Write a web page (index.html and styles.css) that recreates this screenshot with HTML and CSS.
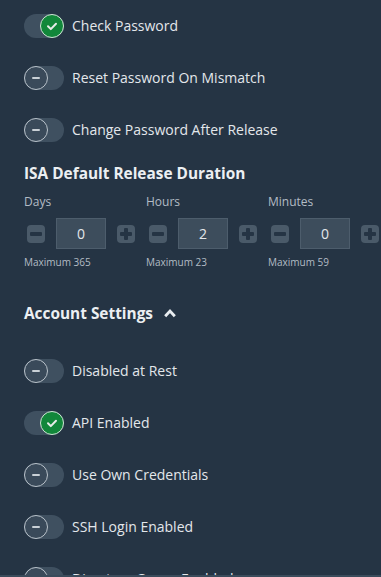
FILE: index.html
```html
<!DOCTYPE html>
<html>
<head>
<meta charset="utf-8">
<link rel="stylesheet" href="styles.css">
</head>
<body>
<div class="page">
  <div class="toggles first">
    <div class="row"><span class="toggle on"><span class="knob"><svg viewBox="0 0 24 24" width="24" height="24"><path d="M8 12.3l2.8 2.8 5.2-5.4" fill="none" stroke="#e6ece8" stroke-width="2" stroke-linecap="round" stroke-linejoin="round"/></svg></span></span><span class="label">Check Password</span></div>
    <div class="row"><span class="toggle"><span class="knob"><span class="dash"></span></span></span><span class="label">Reset Password On Mismatch</span></div>
    <div class="row"><span class="toggle"><span class="knob"><span class="dash"></span></span></span><span class="label">Change Password After Release</span></div>
  </div>

  <h2 class="heading isa">ISA Default Release Duration</h2>
  <div class="durations">
    <div class="dur">
      <div class="dlabel">Days</div>
      <div class="stepper">
        <span class="btn minus"><span class="h"></span></span>
        <span class="num">0</span>
        <span class="btn plus"><span class="h"></span><span class="v"></span></span>
      </div>
      <div class="max">Maximum 365</div>
    </div>
    <div class="dur">
      <div class="dlabel">Hours</div>
      <div class="stepper">
        <span class="btn minus"><span class="h"></span></span>
        <span class="num">2</span>
        <span class="btn plus"><span class="h"></span><span class="v"></span></span>
      </div>
      <div class="max">Maximum 23</div>
    </div>
    <div class="dur">
      <div class="dlabel">Minutes</div>
      <div class="stepper">
        <span class="btn minus"><span class="h"></span></span>
        <span class="num">0</span>
        <span class="btn plus"><span class="h"></span><span class="v"></span></span>
      </div>
      <div class="max">Maximum 59</div>
    </div>
  </div>

  <h2 class="heading acct">Account Settings <svg class="chev" viewBox="0 0 12 10" width="12" height="10"><path d="M1.2 8.2L6 3l4.8 5.2" fill="none" stroke="#e8ecf0" stroke-width="2.8" stroke-linejoin="miter"/></svg></h2>

  <div class="toggles second">
    <div class="row"><span class="toggle"><span class="knob"><span class="dash"></span></span></span><span class="label">Disabled at Rest</span></div>
    <div class="row"><span class="toggle on"><span class="knob"><svg viewBox="0 0 24 24" width="24" height="24"><path d="M8 12.3l2.8 2.8 5.2-5.4" fill="none" stroke="#e6ece8" stroke-width="2" stroke-linecap="round" stroke-linejoin="round"/></svg></span></span><span class="label">API Enabled</span></div>
    <div class="row"><span class="toggle"><span class="knob"><span class="dash"></span></span></span><span class="label">Use Own Credentials</span></div>
    <div class="row"><span class="toggle"><span class="knob"><span class="dash"></span></span></span><span class="label">SSH Login Enabled</span></div>
    <div class="row"><span class="toggle"><span class="knob"><span class="dash"></span></span></span><span class="label">Directory Group Enabled</span></div>
  </div>
</div>
</body>
</html>
```
FILE: styles.css
```css
html, body {
  margin: 0;
  padding: 0;
  background: #253444;
}
body {
  font-family: "Open Sans", "Noto Sans", sans-serif;
  color: #e3e7eb;
  width: 381px;
  height: 577px;
  overflow: hidden;
}
.page {
  height: 575px;
  overflow: hidden;
  border-bottom: 2px solid #3a4b5b;
  padding-left: 24px;
  box-sizing: content-box;
}
.toggles {
  display: flex;
  flex-direction: column;
  gap: 28px;
}
.toggles.first { padding-top: 14px; }
.toggles.second { margin-top: 34px; }
.row {
  display: flex;
  align-items: center;
  height: 24px;
  gap: 8px;
}
.toggle {
  width: 40px;
  height: 24px;
  border-radius: 12px;
  background: #3f5060;
  display: flex;
  align-items: center;
  justify-content: flex-start;
  flex: none;
}
.toggle.on { justify-content: flex-end; }
.knob {
  width: 24px;
  height: 24px;
  box-sizing: border-box;
  border-radius: 50%;
  border: 1px solid #b9c2ca;
  background: #3a4a5a;
  display: flex;
  align-items: center;
  justify-content: center;
}
.toggle.on .knob {
  background: #11873a;
  border-color: #cfe3d5;
}
.toggle.on .knob svg { margin: -1px; }
.dash {
  width: 8px;
  height: 2px;
  border-radius: 1px;
  background: #c9d0d6;
}
.label {
  font-size: 14px;
  line-height: 20px;
  color: #e3e7eb;
}
.heading {
  margin: 0;
  font-size: 15.4px;
  line-height: 22px;
  font-weight: 700;
  color: #eceff2;
}
.heading.isa { margin-top: 21px; }
.heading.acct {
  margin-top: 34px;
  display: flex;
  align-items: center;
  gap: 11px;
}
.chev { margin-top: -2px; }
.durations {
  display: flex;
  margin-top: 9px;
}
.dur {
  width: 122px;
  flex: none;
}
.dlabel {
  font-size: 12px;
  line-height: 16px;
  color: #b3bcc5;
  height: 16px;
}
.stepper {
  margin-top: 8px;
  display: flex;
  align-items: center;
  height: 31px;
}
.btn {
  width: 18px;
  height: 18px;
  border-radius: 4px;
  background: #4a5a69;
  display: flex;
  align-items: center;
  justify-content: center;
  position: relative;
  flex: none;
}
.btn.minus { margin-left: 3px; }
.btn .h {
  width: 12px;
  height: 4px;
  background: #253444;
  border-radius: 1px;
}
.btn .v {
  position: absolute;
  left: 7px;
  top: 3px;
  width: 4px;
  height: 12px;
  background: #253444;
  border-radius: 1px;
}
.num {
  margin-left: 11px;
  margin-right: 11px;
  width: 50px;
  height: 31px;
  box-sizing: border-box;
  background: #3d4d5c;
  border: 1px solid #4d5d6c;
  display: flex;
  align-items: center;
  justify-content: center;
  font-size: 14px;
  color: #e3e7eb;
  flex: none;
}
.max {
  margin-top: 6px;
  font-size: 10px;
  line-height: 14px;
  color: #b3bcc5;
}
```
